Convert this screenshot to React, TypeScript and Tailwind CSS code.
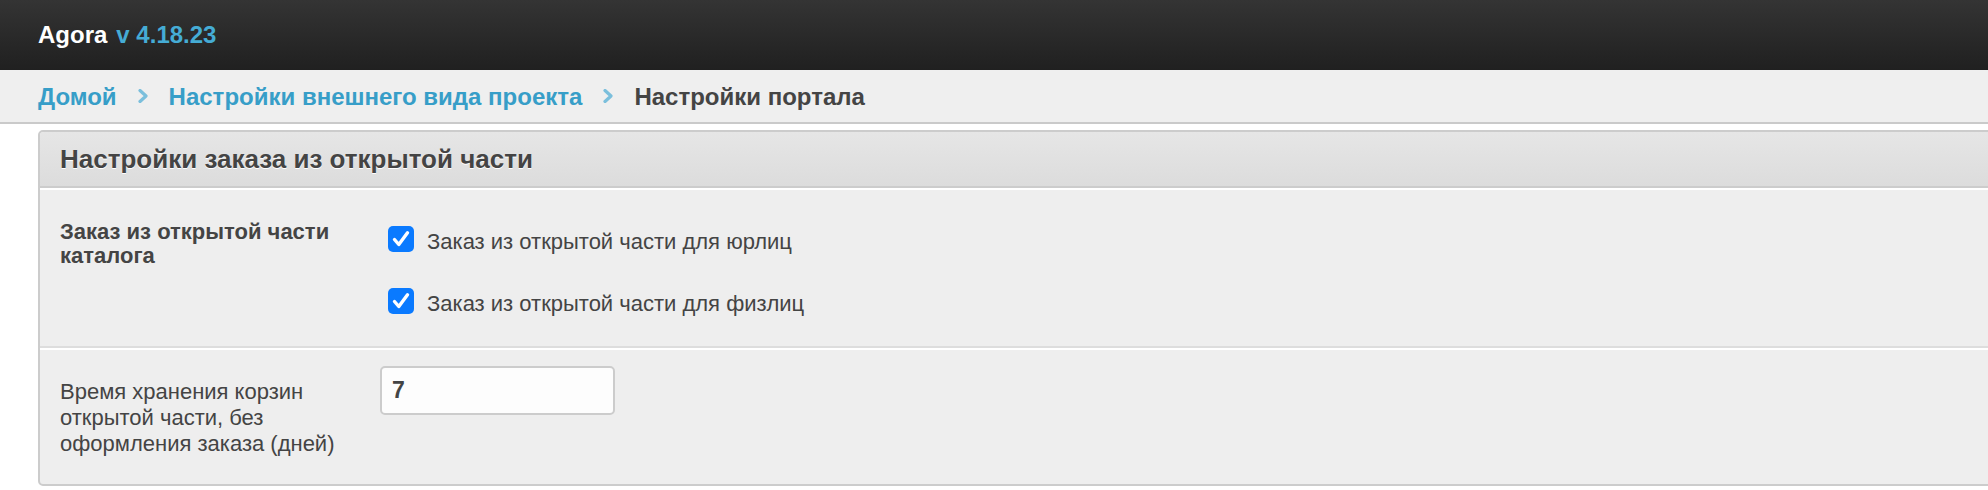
import React from "react";

const font = { fontFamily: '"Liberation Sans", Arial, Helvetica, sans-serif' };

function Chevron() {
  return (
    <svg width="12" height="14" viewBox="0 0 12 14" className="mx-[20px] shrink-0">
      <path d="M3 1.5 L9 7 L3 12.5" fill="none" stroke="#7bbfdc" strokeWidth="3.2" strokeLinecap="round" strokeLinejoin="round" />
    </svg>
  );
}

function Check({ label }: { label: string }) {
  return (
    <div className="flex items-start h-[26px] ml-[8px]">
      <span className="w-[26px] h-[26px] rounded-[5px] bg-[#0a7aff] flex items-center justify-center shrink-0">
        <svg width="26" height="26" viewBox="0 0 26 26">
          <path d="M6.5 13.5 L10.8 18.5 L19.5 6.8" fill="none" stroke="#ffffff" strokeWidth="3.4" strokeLinecap="round" strokeLinejoin="round" />
        </svg>
      </span>
      <span className="ml-[13px] mt-[3px] text-[22px] leading-[26px] text-[#444444] whitespace-nowrap">{label}</span>
    </div>
  );
}

export default function App() {
  return (
    <div className="w-full h-[490px] bg-white overflow-hidden" style={font}>
      <div className="h-[70px] bg-linear-to-b from-[#343434] to-[#202020] flex items-center pl-[38px] pb-[2px]">
        <span className="text-white font-bold text-[24px] leading-[27px]">Agora</span>
        <span className="ml-[9px] text-[#45acd5] font-bold text-[24px] leading-[27px]">v 4.18.23</span>
      </div>
      <div className="h-[54px] bg-[#efefef] border-b-2 border-[#cacaca] flex items-center pl-[38px] text-[24px] font-bold leading-[27px]">
        <span className="text-[#379ec8]">Домой</span>
        <Chevron />
        <span className="text-[#379ec8]">Настройки внешнего вида проекта</span>
        <Chevron />
        <span className="text-[#444444]">Настройки портала</span>
      </div>
      <div className="pl-[38px] pt-[6px]">
        <div className="-mr-6 border-2 border-[#cccccc] rounded-[5px] bg-[#eeeeee]">
          <div className="h-[56px] bg-linear-to-b from-[#e6e6e6] to-[#dcdcdc] border-b-2 border-[#cccccc] flex items-center pl-[20px] rounded-t-[4px]">
            <span className="text-[26px] font-bold text-[#444444] leading-[29px] [text-shadow:0_1px_0_#ffffff]">
              Настройки заказа из открытой части
            </span>
          </div>
          <div className="border-t-2 border-white flex pt-[30px] pb-[32px] border-b-2 border-b-[#dddddd]">
            <div className="w-[340px] pl-[20px] pr-[24px] text-[22px] font-bold leading-[24px] text-[#444444]">
              Заказ из открытой части каталога
            </div>
            <div className="flex flex-col gap-[36px] pt-[6px]">
              <Check label="Заказ из открытой части для юрлиц" />
              <Check label="Заказ из открытой части для физлиц" />
            </div>
          </div>
          <div className="border-t-2 border-white flex pt-[16px] pb-[27px]">
            <div className="w-[340px] pl-[20px] pr-[40px] mt-[13px] text-[22px] leading-[26px] text-[#444444]">
              Время хранения корзин открытой части, без оформления заказа (дней)
            </div>
            <div className="w-[235px] h-[49px] border-2 border-[#cccccc] rounded-[5px] bg-[#fdfdfd] flex items-center pl-[10px] text-[23px] font-bold text-[#444444]">
              7
            </div>
          </div>
        </div>
      </div>
    </div>
  );
}
